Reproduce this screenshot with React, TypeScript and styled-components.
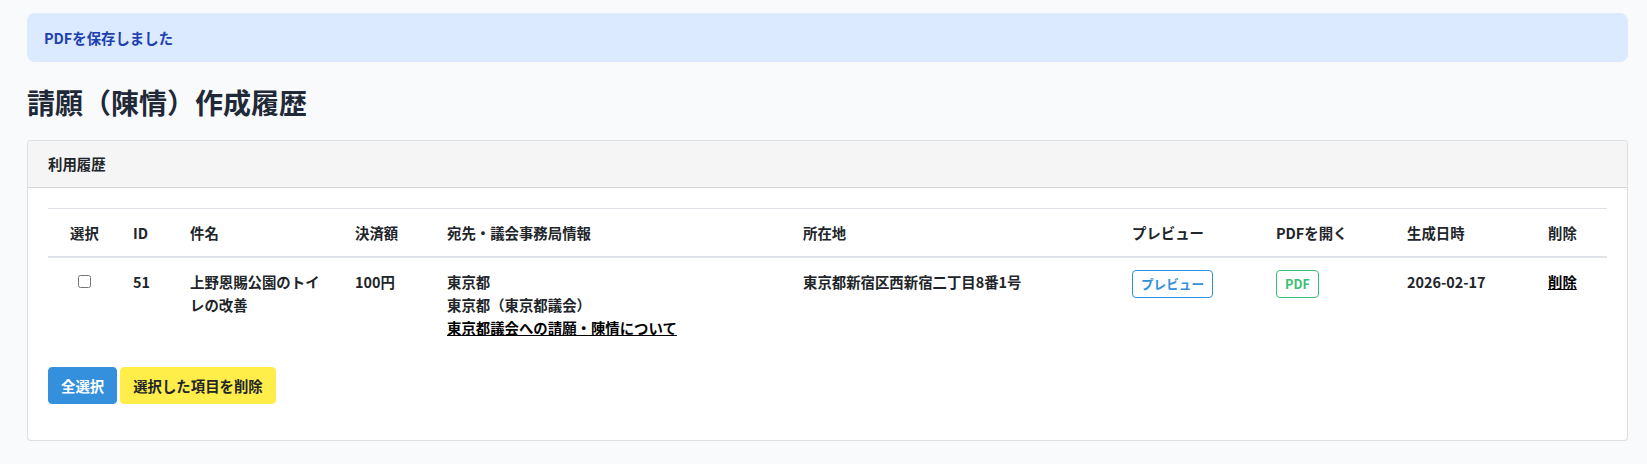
import styled, { createGlobalStyle } from 'styled-components';

const GlobalStyles = createGlobalStyle`
  html, body {
    margin: 0;
    padding: 0;
    background: #f8fafc;
  }
  body {
    font-family: "Noto Sans CJK JP", "Noto Sans", sans-serif;
    font-size: 14.4px;
    line-height: 1.6;
    color: #212529;
  }
`;

const Page = styled.main`
  padding: 13px 19px 22px 27px;
`;

const Alert = styled.div`
  background: #dbeafe;
  color: #1e40af;
  border-radius: 8px;
  padding: 13px 17px;
  font-weight: 700;
  line-height: 23px;
`;

const Heading = styled.h1`
  margin: 24px 0 20px;
  font-size: 28px;
  line-height: 1.2;
  font-weight: 700;
  color: #1f2937;
`;

const Card = styled.section`
  background: #fff;
  border: 1px solid rgba(0, 0, 0, 0.125);
  border-radius: 4px;
`;

const CardHeader = styled.div`
  background: #f5f5f5;
  border-bottom: 1px solid rgba(0, 0, 0, 0.125);
  padding: 12px 20px;
  line-height: 22px;
  font-weight: 700;
  border-radius: 4px 4px 0 0;
`;

const CardBody = styled.div`
  padding: 20px;
`;

const Table = styled.table`
  width: 100%;
  table-layout: fixed;
  border-collapse: collapse;
  margin-bottom: 16px;
`;

const Th = styled.th<{ $w: number; $center?: boolean }>`
  box-sizing: border-box;
  width: ${(p) => p.$w}px;
  padding: 12px;
  text-align: ${(p) => (p.$center ? 'center' : 'left')};
  vertical-align: bottom;
  font-weight: 700;
  line-height: 23px;
  border-top: 1px solid #dee2e6;
  border-bottom: 2px solid #dee2e6;
`;

const Td = styled.td<{ $center?: boolean }>`
  padding: 12px;
  text-align: ${(p) => (p.$center ? 'center' : 'left')};
  vertical-align: top;
  font-weight: 700;
  line-height: 23px;
  word-break: break-all;
`;

const Check = styled.input`
  width: 13px;
  height: 13px;
  margin: 5px 0 0;
`;

const Line = styled.div``;

const TextLink = styled.a`
  color: #000;
  text-decoration: underline;
  cursor: pointer;
`;

const OutlineButton = styled.button<{ $tone: string }>`
  display: inline-block;
  font-family: inherit;
  font-size: 12.6px;
  font-weight: 700;
  line-height: 18px;
  padding: 4px 8px;
  background: #fff;
  color: ${(p) => p.$tone};
  border: 1px solid ${(p) => p.$tone};
  border-radius: 4px;
  cursor: pointer;
`;

const Actions = styled.div`
  display: flex;
  gap: 3px;
  margin-bottom: 16px;
`;

const ActionButton = styled.button<{ $bg: string; $fg: string }>`
  font-family: inherit;
  font-size: 14.4px;
  font-weight: 700;
  line-height: 23px;
  padding: 6px 12px;
  background: ${(p) => p.$bg};
  color: ${(p) => p.$fg};
  border: 1px solid ${(p) => p.$bg};
  border-radius: 4px;
  cursor: pointer;
`;

const columns = [
  { label: '選択', w: 73, center: true },
  { label: 'ID', w: 57 },
  { label: '件名', w: 165 },
  { label: '決済額', w: 92 },
  { label: '宛先・議会事務局情報', w: 356 },
  { label: '所在地', w: 329 },
  { label: 'プレビュー', w: 144 },
  { label: 'PDFを開く', w: 131 },
  { label: '生成日時', w: 141 },
  { label: '削除', w: 71 },
];

export default function App() {
  return (
    <>
      <GlobalStyles />
      <Page>
        <Alert>PDFを保存しました</Alert>
        <Heading>請願（陳情）作成履歴</Heading>
        <Card>
          <CardHeader>利用履歴</CardHeader>
          <CardBody>
            <Table>
              <thead>
                <tr>
                  {columns.map((c) => (
                    <Th key={c.label} $w={c.w} $center={c.center}>
                      {c.label}
                    </Th>
                  ))}
                </tr>
              </thead>
              <tbody>
                <tr>
                  <Td $center>
                    <Check type="checkbox" />
                  </Td>
                  <Td>51</Td>
                  <Td>上野恩賜公園のトイレの改善</Td>
                  <Td>100円</Td>
                  <Td>
                    <Line>東京都</Line>
                    <Line>東京都（東京都議会）</Line>
                    <Line>
                      <TextLink>東京都議会への請願・陳情について</TextLink>
                    </Line>
                  </Td>
                  <Td>東京都新宿区西新宿二丁目8番1号</Td>
                  <Td>
                    <OutlineButton type="button" $tone="#3490dc">
                      プレビュー
                    </OutlineButton>
                  </Td>
                  <Td>
                    <OutlineButton type="button" $tone="#38c172">
                      PDF
                    </OutlineButton>
                  </Td>
                  <Td>2026-02-17</Td>
                  <Td>
                    <TextLink>削除</TextLink>
                  </Td>
                </tr>
              </tbody>
            </Table>
            <Actions>
              <ActionButton type="button" $bg="#3490dc" $fg="#fff">
                全選択
              </ActionButton>
              <ActionButton type="button" $bg="#ffed4a" $fg="#212529">
                選択した項目を削除
              </ActionButton>
            </Actions>
          </CardBody>
        </Card>
      </Page>
    </>
  );
}
